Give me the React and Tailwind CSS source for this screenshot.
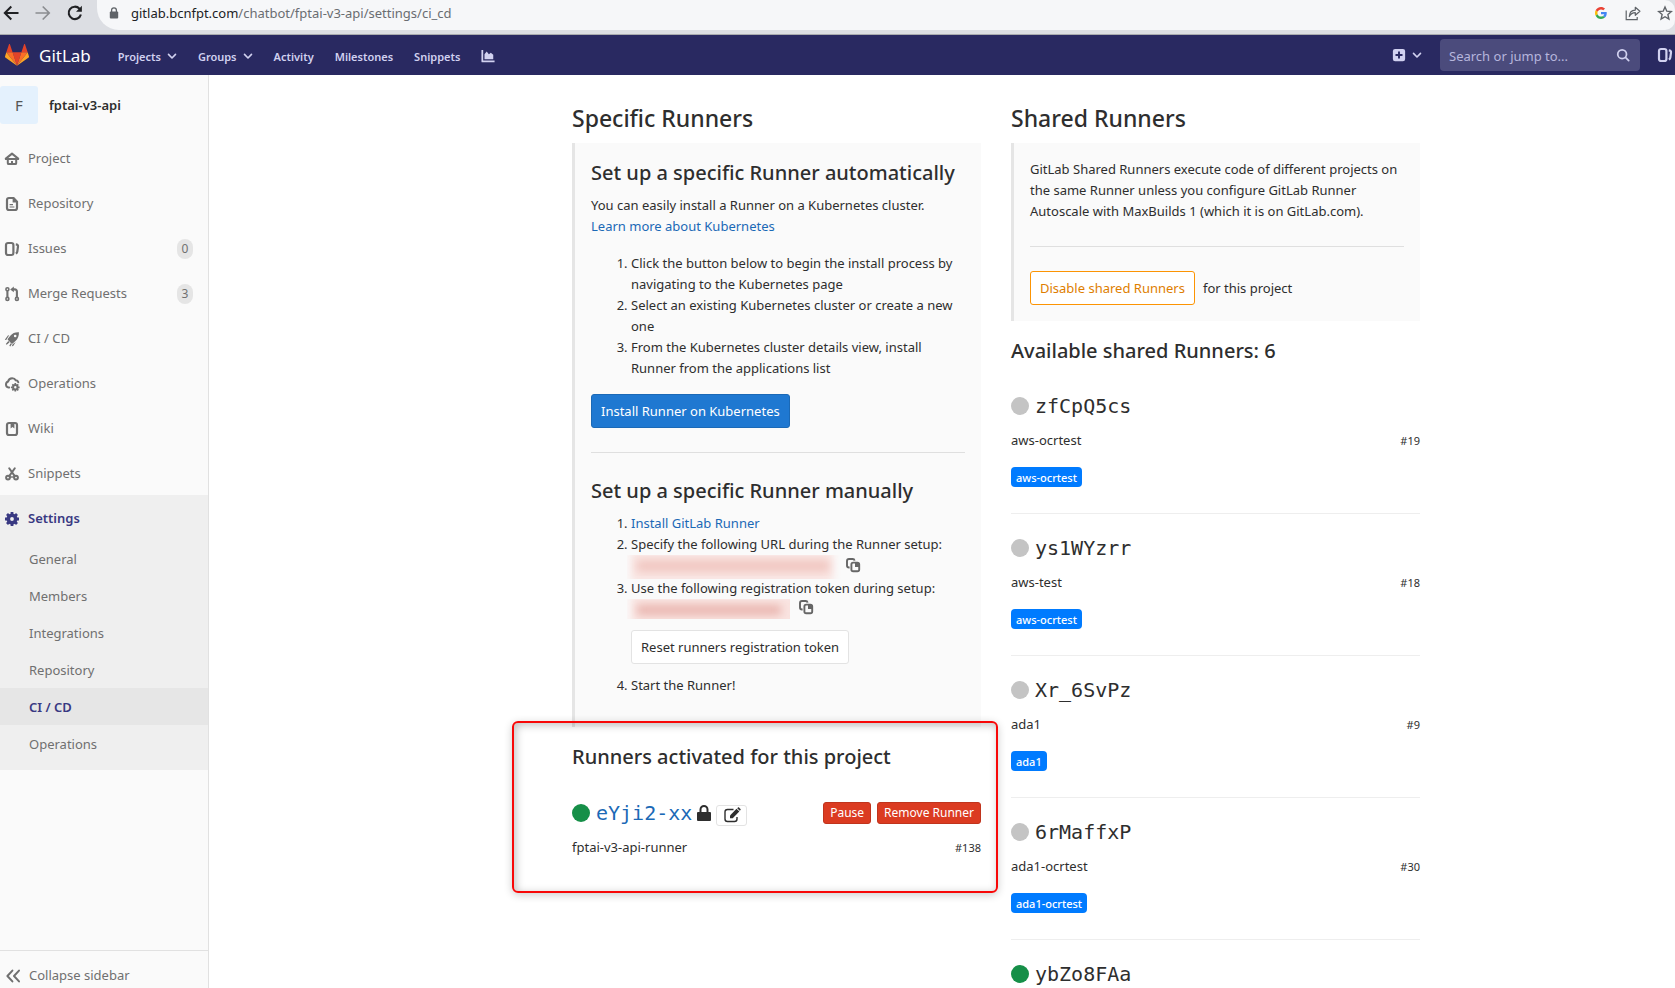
import React from "react";

const Svg = ({ size = "size-4", children, ...rest }) => (
  <svg viewBox="0 0 16 16" className={`${size} shrink-0`} fill="none" stroke="currentColor" strokeWidth="2" aria-hidden="true" {...rest}>
    {children}
  </svg>
);

const HomeIcon = () => (
  <Svg>
    <path d="M1.800 7.600 8 2.600l6.200 5" strokeLinecap="round" strokeLinejoin="round" />
    <path d="M1.800 7.900h12.400" strokeLinecap="round" />
    <path d="M3.800 8v4.200c0 .5.400.9.900.9h6.600c.5 0 .9-.4.900-.9V8" />
    <path d="M8 10v2.500" />
  </Svg>
);
const DocIcon = () => (
  <Svg strokeWidth="2.200">
    <path d="M9.600 2H5a2 2 0 0 0-2 2v8a2 2 0 0 0 2 2h6a2 2 0 0 0 2-2V5.600z" />
    <path d="M8.600 1.600v4.800h4.800z" fill="currentColor" stroke="none" />
    <path d="M5.600 8.600h3.400M5.600 11h4.800" strokeWidth="1.200" />
  </Svg>
);
const IssuesIcon = ({ size }) => (
  <Svg size={size}>
    <rect x="2" y="2" width="7.400" height="12" rx="2" strokeWidth="2.200" />
    <path d="M11.800 3.300c1.700.2 2.400.9 2.200 2.200l-.7 5.200c-.1.900-.5 1.500-1.500 1.900" strokeWidth="2.200" />
  </Svg>
);
const MergeIcon = () => (
  <Svg strokeWidth="1.600">
    <circle cx="3.400" cy="3.200" r="1.500" />
    <circle cx="3.400" cy="12.900" r="1.500" />
    <circle cx="12.900" cy="12.900" r="1.500" />
    <path d="M3.400 5v6M12.900 11V5.400c0-1.300-.8-2-2.100-2H8.300" strokeWidth="2.100" />
    <path d="M9.800.600v5.600L6.200 3.400z" fill="currentColor" stroke="none" />
  </Svg>
);
const RocketIcon = () => (
  <Svg fill="currentColor" stroke="none">
    <path fillRule="evenodd" d="M14.900 1.200c.2 3.700-.9 6.400-3.400 8.700l-2.900 2.500c-.5.400-1 .3-1.400-.1L4 9.100c-.4-.4-.5-.9-.1-1.400l2.400-3C8.600 2.100 11.200 1 14.900 1.200zM11.200 6.300a1.300 1.300 0 1 0 0-2.600 1.300 1.300 0 0 0 0 2.600z" />
    <path d="M.8 8.800 3.900 4.600l1.300-.4L2.200 8.900zM1.800 13l2.500-3 1.300 1.200-2.900 2.600zM7.800 15.200l.9-2 3-2.100-2.500 3.800zM5.300 14.800l1.400-2.600 1.200.8-1.600 2.400z" />
  </Svg>
);
const CloudGearIcon = () => (
  <Svg>
    <path d="M5.200 11.400H4.600A3 3 0 0 1 2 8.400c0-1.500.9-2.500 2.100-2.900C4.600 3.400 6.100 2.200 8.200 2.200c1.600 0 2.900.8 3.500 2 1.300.1 2.300.9 2.600 2" strokeLinecap="round" />
    <circle cx="11.300" cy="11.300" r="2.200" strokeWidth="2" />
    <path d="M11.300 7v1.800M11.300 13.800v1.800M7 11.300h1.800M13.800 11.300h1.800M8.300 8.300l1.200 1.200M13.100 13.100l1.200 1.200M14.300 8.300l-1.200 1.200M9.500 13.100l-1.200 1.200" strokeWidth="1.700" />
  </Svg>
);
const WikiIcon = () => (
  <Svg>
    <rect x="3" y="2" width="10" height="12" rx="2" strokeWidth="2.200" />
    <path d="M6.600 2.400h3.800v5L8.500 6.100 6.600 7.400z" fill="currentColor" stroke="none" />
  </Svg>
);
const ScissorsIcon = () => (
  <Svg>
    <circle cx="4" cy="11.600" r="1.900" />
    <circle cx="12" cy="11.600" r="1.900" />
    <path d="M10.400 9.600 5.200 2.200M5.600 9.600l5.200-7.400" strokeLinecap="round" />
    <path d="M5.500 11h5" strokeWidth="1.400" />
  </Svg>
);
const GearIcon = () => (
  <Svg>
    <circle cx="8" cy="8" r="3.700" strokeWidth="3.600" />
    <path d="M8 1v3M8 12v3M1 8h3M12 8h3M3 3l2 2M11 11l2 2M13 3l-2 2M5 11l-2 2" strokeWidth="2.800" />
  </Svg>
);
const CollapseIcon = () => (
  <Svg strokeLinecap="round" strokeLinejoin="round">
    <path d="M7.400 2.600 2.400 8l5 5.400M14 2.600 9 8l5 5.400" />
  </Svg>
);
const Chevron = () => (
  <svg viewBox="0 0 10 10" className="size-[10px] shrink-0" fill="none" stroke="currentColor" strokeWidth="1.600" strokeLinecap="round" strokeLinejoin="round" aria-hidden="true">
    <path d="M1.500 3.400 5 7l3.500-3.600" />
  </svg>
);
const CopyIcon = () => (
  <Svg strokeWidth="1.900">
    <path d="M4.600 10.500H4a2 2 0 0 1-2-2V4a2 2 0 0 1 2-2h3.600a2 2 0 0 1 2 1.600" />
    <rect x="6.400" y="5.600" width="7.800" height="8.600" rx="1.800" />
    <path d="M10 5v5h4.600V8L11.800 5z" fill="currentColor" stroke="none" />
  </Svg>
);

const Tanuki = () => (
  <svg viewBox="0 0 24 24" className="size-6 shrink-0" aria-hidden="true">
    <path fill="#e24329" d="M4.900 1.200c-.1-.4-.7-.4-.9 0L1.300 9.300h6.300zM19.100 1.200c.1-.4.700-.4.900 0l2.700 8.100h-6.300z" />
    <path fill="#e24329" d="m12 22.800 4.400-13.500H7.600z" />
    <path fill="#fc6d26" d="M12 22.800 7.600 9.300H1.300zM12 22.800l4.400-13.500h6.300z" />
    <path fill="#fca326" d="M1.300 9.300 0 13.400c-.1.400 0 .8.300 1L12 22.800zM22.700 9.300l1.300 4.100c.1.400 0 .8-.3 1L12 22.800z" />
  </svg>
);

const navItems = [
  ["Project", HomeIcon],
  ["Repository", DocIcon],
  ["Issues", IssuesIcon, "0"],
  ["Merge Requests", MergeIcon, "3"],
  ["CI / CD", RocketIcon],
  ["Operations", CloudGearIcon],
  ["Wiki", WikiIcon],
  ["Snippets", ScissorsIcon],
];
const subItems = ["General", "Members", "Integrations", "Repository", "CI / CD", "Operations"];
const sharedRunners = [
  { token: "zfCpQ5cs", name: "aws-ocrtest", id: "#19", tag: "aws-ocrtest" },
  { token: "ys1WYzrr", name: "aws-test", id: "#18", tag: "aws-ocrtest" },
  { token: "Xr_6SvPz", name: "ada1", id: "#9", tag: "ada1" },
  { token: "6rMaffxP", name: "ada1-ocrtest", id: "#30", tag: "ada1-ocrtest" },
  { token: "ybZo8FAa", name: "", id: "", tag: "", online: true },
];

function BrowserBar() {
  return (
    <div className="flex h-[35px] shrink-0 items-start overflow-hidden border-b border-[#a9abae] bg-[#dcdee3]">
      <div className="flex h-[26px] w-[97px] shrink-0 items-center gap-4 pl-[3px]">
        <button aria-label="Back" className="text-[#202124]">
          <Svg><path d="M15.500 8H2M8.300 1.500 1.800 8l6.500 6.500" strokeWidth="2" /></Svg>
        </button>
        <button aria-label="Forward" className="text-[#8b8d91]">
          <Svg><path d="M.5 8H14M7.700 1.500 14.200 8l-6.500 6.500" strokeWidth="1.700" /></Svg>
        </button>
        <button aria-label="Reload" className="text-[#202124]">
          <Svg><path d="M13.900 9.500A6.200 6.200 0 1 1 12.500 3.700l1 1" strokeWidth="2.100" /><path d="M14.900.8v6H9z" fill="currentColor" stroke="none" /></Svg>
        </button>
      </div>
      <div className="flex h-[30px] min-w-0 flex-1 items-center rounded-r-[10px] rounded-bl-[22px] bg-[#f6f7f9] pb-1 pl-3">
        <svg viewBox="0 0 10 12" className="h-3 w-[10px]" aria-hidden="true">
          <path d="M2.600 5V3.200a2.400 2.400 0 0 1 4.800 0V5" fill="none" stroke="#5f6368" strokeWidth="1.300" />
          <rect x=".8" y="4.500" width="8.400" height="7" rx="1" fill="#5f6368" />
        </svg>
        <p className="ml-3 flex-1 font-['Noto_Sans',sans-serif] text-[13px] leading-5 text-[#6a6d71]">
          <span className="text-[#202124]">gitlab.bcnfpt.com</span>/chatbot/fptai-v3-api/settings/ci_cd
        </p>
        <button aria-label="Google" className="mr-[18px]">
          <svg viewBox="0 0 48 48" className="size-3" aria-hidden="true">
            <path fill="#EA4335" d="M24 9.500c3.540 0 6.710 1.220 9.210 3.600l6.850-6.850C35.900 2.380 30.470 0 24 0 14.620 0 6.510 5.380 2.560 13.220l7.980 6.190C12.430 13.720 17.740 9.500 24 9.500z" />
            <path fill="#4285F4" d="M46.980 24.550c0-1.570-.15-3.090-.38-4.550H24v9.020h12.940c-.58 2.960-2.260 5.480-4.780 7.180l7.730 6c4.510-4.180 7.090-10.360 7.090-17.650z" />
            <path fill="#FBBC05" d="M10.530 28.590c-.48-1.450-.76-2.990-.76-4.590s.27-3.140.76-4.590l-7.980-6.190C.92 16.460 0 20.120 0 24c0 3.880.92 7.540 2.560 10.780l7.970-6.190z" />
            <path fill="#34A853" d="M24 48c6.480 0 11.930-2.130 15.890-5.810l-7.730-6c-2.150 1.450-4.920 2.300-8.160 2.300-6.260 0-11.570-4.220-13.470-9.910l-7.980 6.190C6.510 42.620 14.620 48 24 48z" />
          </svg>
        </button>
        <button aria-label="Share" className="mr-4 text-[#5f6368]">
          <Svg strokeWidth="1.200"><path d="M1.200 5.500v9.200h11V12" /><path d="M4.300 11.500c.2-4 2.200-6.300 6-6.400V2.300l4.600 4-4.600 4V7.600c-2.900 0-4.700 1.200-6 3.900z" strokeLinejoin="round" /></Svg>
        </button>
        <button aria-label="Bookmark" className="mr-[2px] text-[#5f6368]">
          <Svg strokeWidth="1.400"><path d="m8 2 1.800 4.200 4.500.4-3.400 3 1 4.400L8 11.700 4.100 14l1-4.400-3.400-3 4.500-.4z" /></Svg>
        </button>
      </div>
    </div>
  );
}

function Navbar() {
  return (
    <header className="flex h-10 shrink-0 items-center overflow-hidden bg-[#292961] text-[11px] font-semibold text-[#d1d1f0]">
      <a href="#" className="flex items-center gap-[10px] pl-[5px] text-[17px] font-normal text-white">
        <Tanuki />
        <span>GitLab</span>
      </a>
      <nav className="flex items-center gap-[21px] pt-0.5 pl-[27px]">
        <button className="flex items-center gap-[6px] font-semibold">Projects <Chevron /></button>
        <button className="flex items-center gap-[6px] font-semibold">Groups <Chevron /></button>
        <a href="#">Activity</a>
        <a href="#">Milestones</a>
        <a href="#">Snippets</a>
        <a href="#" aria-label="Analytics">
          <Svg size="size-[14px]" fill="currentColor" stroke="none">
            <path d="M.5 1.200h2v12h13v2H1.500a1 1 0 0 1-1-1z" />
            <path d="M4 11.800V6l2.500-3.200L9 6l2.200-1.800L14 6.500v5.300z" />
          </Svg>
        </a>
      </nav>
      <div className="ml-auto flex items-center">
        <button aria-label="New" className="flex items-center gap-[6px]">
          <Svg size="size-[14px]" stroke="none">
            <rect x="1" y="1" width="14" height="14" rx="2.500" fill="currentColor" />
            <path d="M8 4v8M4 8h8" stroke="#292961" strokeWidth="2.200" />
          </Svg>
          <Chevron />
        </button>
        <label className="ml-[18px] flex h-8 w-[200px] items-center rounded bg-[#4b4b7c] pr-[10px] pl-[9px]">
          <input aria-label="Search" placeholder="Search or jump to..." className="min-w-0 flex-1 bg-transparent pt-0.5 text-[13px] font-normal outline-none placeholder:text-[#b6b6dc]" />
          <Svg size="size-[14px]"><circle cx="7" cy="7" r="5" /><path d="m10.800 10.800 3.700 3.700" strokeLinecap="round" /></Svg>
        </label>
        <a href="#" aria-label="Issues" className="mr-[2px] ml-[17px]"><IssuesIcon /></a>
      </div>
    </header>
  );
}

function Sidebar() {
  return (
    <aside className="flex w-[209px] shrink-0 flex-col border-r border-[#e1e1e1] bg-[#fafafa] text-[#707070]">
      <a href="#" className="flex h-[60px] shrink-0 items-center gap-[11px] font-semibold text-[#2e2e2e]">
        <span className="flex size-[38px] items-center justify-center rounded-[3px] bg-[#e4f1fd] text-[15px] font-normal text-[#555]">F</span>
        fptai-v3-api
      </a>
      <nav>
        {navItems.map(([label, Icon, count]) => (
          <a href="#" key={label} className="flex h-[45px] items-center gap-2 pt-0.5 pl-1 pr-[15px]">
            <Icon />
            <span className="flex-1">{label}</span>
            {count && <span className="flex h-5 w-4 items-center justify-center rounded-full bg-[#e5e5e5] text-xs">{count}</span>}
          </a>
        ))}
        <div className="bg-[#efefef] pb-2">
          <a href="#" className="flex h-[45px] items-center gap-2 pt-0.5 pl-1 font-semibold text-[#393982]">
            <GearIcon />
            Settings
          </a>
          {subItems.map((label) => (
            <a href="#" key={label} className={label === "CI / CD" ? "flex h-[37px] items-center bg-[#e6e6e6] pt-0.5 pl-[29px] font-semibold text-[#393982]" : "flex h-[37px] items-center pt-0.5 pl-[29px]"}>
              {label}
            </a>
          ))}
        </div>
      </nav>
      <button className="mt-auto flex h-[38px] w-full items-center gap-2 border-t border-[#e1e1e1] pt-3 pl-[5px]">
        <CollapseIcon />
        Collapse sidebar
      </button>
    </aside>
  );
}

const Redacted = ({ wide }) => (
  <svg viewBox={wide ? "0 0 214 24" : "0 0 163 20"} className={wide ? "-ml-1 h-6 w-[214px]" : "-ml-1 h-5 w-[163px]"} aria-hidden="true">
    <defs>
      <filter id={wide ? "soft-a" : "soft-b"} x="-10%" y="-50%" width="120%" height="200%">
        <feGaussianBlur stdDeviation="4" />
      </filter>
    </defs>
    <rect x="4" y="-4" width={wide ? 202 : 170} height="32" fill="#f9e3e0" filter={wide ? "url(#soft-a)" : "url(#soft-b)"} />
    <rect x="10" y="6" width={wide ? 192 : 144} height="10" fill={wide ? "#edbdb7" : "#e6aaa4"} fillOpacity="0.8" filter={wide ? "url(#soft-a)" : "url(#soft-b)"} />
  </svg>
);

const Dot = ({ online }) => <span className={online ? "size-[18px] shrink-0 rounded-full bg-[#168f48]" : "size-[18px] shrink-0 rounded-full bg-[#c4c4c4]"} />;

function SpecificRunners() {
  return (
    <section className="min-w-0">
      <h4 className="pb-[10px] text-[23px] font-medium leading-[30px]">Specific Runners</h4>
      <div className="border-l-[3px] border-[#e5e5e5] bg-[#fafafa] p-4 pb-[31px]">
        <h5 className="mb-2 text-[20px] font-medium leading-7">Set up a specific Runner automatically</h5>
        <p>
          You can easily install a Runner on a Kubernetes cluster.<br />
          <a href="#" className="text-[#1b69b6]">Learn more about Kubernetes</a>
        </p>
        <ol className="mt-4 mb-[15px] list-decimal pl-10">
          <li>Click the button below to begin the install process by navigating to the Kubernetes page</li>
          <li>Select an existing Kubernetes cluster or create a new one</li>
          <li>From the Kubernetes cluster details view, install Runner from the applications list</li>
        </ol>
        <button className="h-[34px] rounded-[3px] border border-[#1b69b6] bg-[#1f78d1] px-[9px] text-white">Install Runner on Kubernetes</button>
        <hr className="my-6 border-[#dfdfdf]" />
        <h5 className="mb-2 text-[20px] font-medium leading-7">Set up a specific Runner manually</h5>
        <ol className="list-decimal pl-10">
          <li><a href="#" className="text-[#1b69b6]">Install GitLab Runner</a></li>
          <li>
            Specify the following URL during the Runner setup:
            <div className="flex h-[23px] items-start gap-1 text-[#666]">
              <Redacted wide />
              <button aria-label="Copy URL" className="pt-0.5"><CopyIcon /></button>
            </div>
          </li>
          <li>
            Use the following registration token during setup:
            <div className="flex h-5 items-start gap-2 text-[#666]">
              <Redacted />
              <button aria-label="Copy token"><CopyIcon /></button>
            </div>
            <button className="my-[11px] block h-[34px] rounded-[3px] border border-[#e3e3e3] bg-white px-[9px]">Reset runners registration token</button>
          </li>
          <li>Start the Runner!</li>
        </ol>
      </div>
      <div className="relative pt-4">
        <div className="pointer-events-none absolute -top-[6px] -right-[17px] -left-[60px] h-[172px] rounded-md border-2 border-[#f80808] shadow-[0_2px_8px_rgba(0,0,0,0.2),inset_2px_2px_8px_rgba(0,0,0,0.25)]" />
        <h5 className="text-[20px] font-medium leading-7">Runners activated for this project</h5>
        <div className="mt-[28px] flex h-7 items-center">
          <Dot online />
          <a href="#" className="ml-[6px] font-['DejaVu_Sans_Mono',monospace] text-[20px] text-[#1b69b6]">eYji2-xx</a>
          <svg viewBox="0 0 14 16" className="ml-[5px] h-4 w-[14px] shrink-0" aria-hidden="true">
            <path d="M3.500 7V4.500a3.500 3.500 0 0 1 7 0V7" fill="none" stroke="#2e2e2e" strokeWidth="2" />
            <rect y="7" width="14" height="9" rx="1" fill="#2e2e2e" />
          </svg>
          <button aria-label="Edit" className="mt-1 ml-[5px] flex h-[21px] w-[31px] items-center justify-center rounded-[3px] border border-[#e3e3e3] bg-white">
            <svg viewBox="0 0 18 16" className="h-4 w-[18px]" aria-hidden="true">
              <path d="M10.500 2.500h-6A2.500 2.500 0 0 0 2 5v7a2.500 2.500 0 0 0 2.500 2.500h7A2.500 2.500 0 0 0 14 12v-2" fill="none" stroke="#2e2e2e" strokeWidth="1.400" />
              <path d="m7 8.500 6.500-6.700 2.800 2.700L9.700 11.200H7z" fill="#2e2e2e" />
              <path d="M14.200 1.200 15 .5c.3-.3.700-.3 1 0l1.500 1.500c.3.300.3.700 0 1l-.7.800z" fill="#2e2e2e" />
            </svg>
          </button>
          <div className="ml-auto flex gap-[6px] text-xs text-white">
            <button className="h-[22px] rounded-[3px] border border-[#c0341d] bg-[#db3b21] px-[6px]">Pause</button>
            <button className="h-[22px] rounded-[3px] border border-[#c0341d] bg-[#db3b21] px-[6px]">Remove Runner</button>
          </div>
        </div>
        <div className="mt-[10px] flex items-center justify-between">
          <span>fptai-v3-api-runner</span>
          <small className="text-[11px]">#138</small>
        </div>
      </div>
    </section>
  );
}

function SharedRunners() {
  return (
    <section className="min-w-0">
      <h4 className="pb-[10px] text-[23px] font-medium leading-[30px]">Shared Runners</h4>
      <div className="border-l-[3px] border-[#e5e5e5] bg-[#fafafa] p-4">
        <p>GitLab Shared Runners execute code of different projects on the same Runner unless you configure GitLab Runner Autoscale with MaxBuilds 1 (which it is on GitLab.com).</p>
        <hr className="my-6 border-[#dfdfdf]" />
        <div className="flex items-center gap-2">
          <button className="h-[34px] rounded-[3px] border border-[#fc9403] bg-white px-[9px] text-[#de7e00]">Disable shared Runners</button>
          <span>for this project</span>
        </div>
      </div>
      <h5 className="mt-4 text-[20px] font-medium leading-7">Available shared Runners: 6</h5>
      <ul className="pt-[7px]">
        {sharedRunners.map((r) => (
          <li key={r.token} className="h-[142px] border-b border-[#eee] pt-5">
            <div className="flex h-7 items-center gap-[6px]">
              <Dot online={r.online} />
              <span className="font-['DejaVu_Sans_Mono',monospace] text-[20px]">{r.token}</span>
            </div>
            <div className="mt-[10px] flex h-[21px] items-center justify-between">
              <span>{r.name}</span>
              <small className="text-[11px]">{r.id}</small>
            </div>
            {r.tag && <span className="mt-4 flex h-5 w-fit items-center rounded bg-[#007bff] px-[5px] text-[11px] font-medium text-white">{r.tag}</span>}
          </li>
        ))}
      </ul>
    </section>
  );
}

export default function App() {
  return (
    <div className="flex h-screen flex-col overflow-hidden bg-white font-['Noto_Sans',sans-serif] text-[13px] leading-[21px] text-[#2e2e2e]">
      <BrowserBar />
      <Navbar />
      <div className="flex min-h-0 flex-1">
        <Sidebar />
        <main className="min-w-0 flex-1 overflow-hidden">
          <div className="mx-auto grid w-full max-w-[956px] grid-cols-2 gap-[30px] pt-7 pl-[108px]">
            <SpecificRunners />
            <SharedRunners />
          </div>
        </main>
      </div>
    </div>
  );
}
